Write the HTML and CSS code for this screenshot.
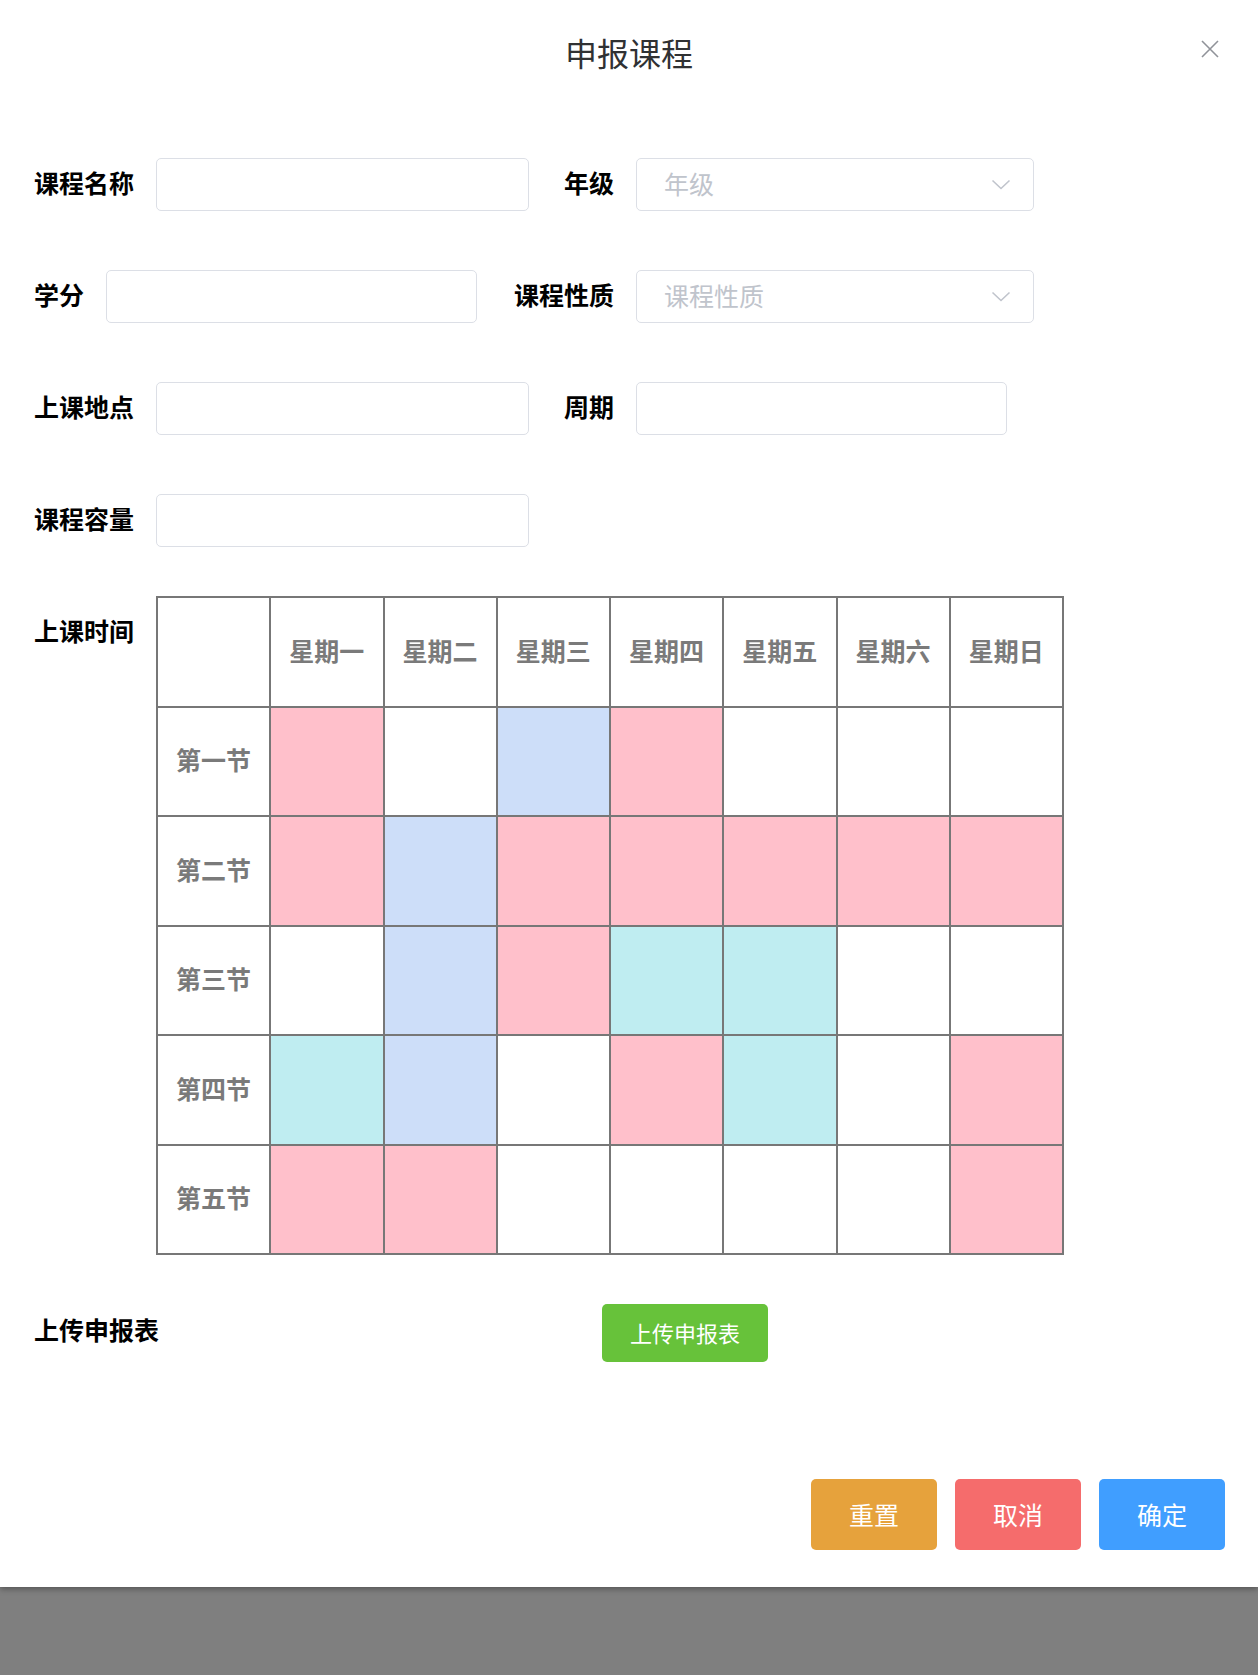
FILE: index.html
```html
<!DOCTYPE html>
<html lang="zh-CN">
<head>
<meta charset="utf-8">
<title>申报课程</title>
<link rel="stylesheet" href="styles.css">
</head>
<body>
<div class="dialog">
  <header class="dialog-header">
    <h1 class="dialog-title">申报课程</h1>
    <button class="close-btn" aria-label="关闭">
      <svg width="20" height="20" viewBox="0 0 20 20"><path d="M2 2L18 18M18 2L2 18" stroke="#909399" stroke-width="1.6" fill="none"/></svg>
    </button>
  </header>

  <div class="dialog-body">
    <div class="form-row">
      <div class="left-pair">
        <label class="form-label">课程名称</label>
        <div class="input w-372"></div>
        <label class="form-label right">年级</label>
      </div>
      <div class="input select w-398">
        <span class="placeholder">年级</span>
        <svg class="chevron" width="20" height="11" viewBox="0 0 20 11"><path d="M1.5 1.5L10 9.5L18.5 1.5" stroke="#c0c4cc" stroke-width="1.6" fill="none"/></svg>
      </div>
    </div>

    <div class="form-row">
      <div class="left-pair">
        <label class="form-label">学分</label>
        <div class="input w-370"></div>
        <label class="form-label right">课程性质</label>
      </div>
      <div class="input select w-398">
        <span class="placeholder">课程性质</span>
        <svg class="chevron" width="20" height="11" viewBox="0 0 20 11"><path d="M1.5 1.5L10 9.5L18.5 1.5" stroke="#c0c4cc" stroke-width="1.6" fill="none"/></svg>
      </div>
    </div>

    <div class="form-row">
      <div class="left-pair">
        <label class="form-label">上课地点</label>
        <div class="input w-372"></div>
        <label class="form-label right">周期</label>
      </div>
      <div class="input w-371"></div>
    </div>

    <div class="form-row">
      <div class="left-pair">
        <label class="form-label">课程容量</label>
        <div class="input w-372"></div>
      </div>
    </div>

    <div class="time-row">
      <label class="form-label time-label">上课时间</label>
      <table class="schedule">
        <tr>
          <th></th>
          <th>星期一</th><th>星期二</th><th>星期三</th><th>星期四</th><th>星期五</th><th>星期六</th><th>星期日</th>
        </tr>
        <tr>
          <th>第一节</th>
          <td class="pink"></td><td></td><td class="blue"></td><td class="pink"></td><td></td><td></td><td></td>
        </tr>
        <tr>
          <th>第二节</th>
          <td class="pink"></td><td class="blue"></td><td class="pink"></td><td class="pink"></td><td class="pink"></td><td class="pink"></td><td class="pink"></td>
        </tr>
        <tr>
          <th>第三节</th>
          <td></td><td class="blue"></td><td class="pink"></td><td class="cyan"></td><td class="cyan"></td><td></td><td></td>
        </tr>
        <tr>
          <th>第四节</th>
          <td class="cyan"></td><td class="blue"></td><td></td><td class="pink"></td><td class="cyan"></td><td></td><td class="pink"></td>
        </tr>
        <tr>
          <th>第五节</th>
          <td class="pink"></td><td class="pink"></td><td></td><td></td><td></td><td></td><td class="pink"></td>
        </tr>
      </table>
    </div>

    <div class="upload-row">
      <label class="form-label upload-label">上传申报表</label>
      <button class="btn btn-success">上传申报表</button>
    </div>
  </div>

  <footer class="dialog-footer">
    <button class="btn btn-lg btn-warning">重置</button>
    <button class="btn btn-lg btn-danger">取消</button>
    <button class="btn btn-lg btn-primary">确定</button>
  </footer>
</div>
</body>
</html>
```

FILE: styles.css
```css
* {
  box-sizing: border-box;
}

html, body {
  margin: 0;
  padding: 0;
}

body {
  background: #7f7f7f;
  font-family: "Noto Sans CJK SC", "Noto Sans", "Liberation Sans", sans-serif;
  height: 1675px;
  overflow: hidden;
}

.dialog {
  position: relative;
  background: #ffffff;
  height: 1587px;
  box-shadow: 0 2px 6px rgba(0, 0, 0, 0.35);
  display: flex;
  flex-direction: column;
}

.dialog-header {
  height: 106px;
  display: flex;
  align-items: center;
  justify-content: center;
}

.dialog-title {
  margin: 0;
  font-size: 32px;
  font-weight: 400;
  color: #303133;
  line-height: 1;
  padding-bottom: 2px;
}

.close-btn {
  position: absolute;
  top: 39px;
  right: 38px;
  width: 20px;
  height: 20px;
  padding: 0;
  border: 0;
  background: transparent;
  display: flex;
}

.dialog-body {
  padding: 52px 0 0 34px;
}

.form-row {
  display: flex;
  align-items: center;
  height: 53px;
  margin-bottom: 59px;
}

.left-pair {
  width: 580px;
  display: flex;
  align-items: center;
}

.form-label {
  font-size: 25px;
  font-weight: 700;
  color: #000000;
  line-height: 1;
  white-space: nowrap;
  padding-bottom: 4px;
}

.form-label.right {
  margin-left: auto;
}

.input {
  height: 53px;
  border: 1px solid #dcdfe6;
  border-radius: 5px;
  background: #fff;
  margin-left: 22px;
}

.select {
  margin-left: 22px;
  display: flex;
  align-items: center;
  justify-content: space-between;
  padding: 0 22px 0 27px;
}

.w-372 { width: 373px; }
.w-370 { width: 371px; }
.w-371 { width: 371px; margin-left: 22px; }
.w-398 { width: 398px; }

.placeholder {
  font-size: 25px;
  color: #c0c4cc;
  line-height: 1;
  padding-bottom: 3px;
}

.chevron {
  display: block;
}

.time-row {
  display: flex;
  align-items: flex-start;
  margin-top: -10px;
}

.time-label {
  padding-top: 22px;
  padding-bottom: 0;
  width: 122px;
}

.schedule {
  border-collapse: collapse;
  width: 908px;
  height: 659px;
  table-layout: fixed;
}

.schedule th,
.schedule td {
  border: 2px solid #777777;
  padding: 0;
  text-align: center;
  vertical-align: middle;
  background: #ffffff;
}

.schedule th {
  font-size: 25px;
  font-weight: 700;
  color: #7a7a7a;
  padding-bottom: 4px;
}

.schedule td.pink { background: #ffc0cb; }
.schedule td.blue { background: #cddef9; }
.schedule td.cyan { background: #bfedf1; }

.upload-row {
  display: flex;
  align-items: center;
  margin-top: 49px;
  height: 58px;
}

.upload-label {
  width: 568px;
  padding-bottom: 7px;
}

.btn {
  border: 0;
  color: #ffffff;
  font-family: inherit;
  font-weight: 400;
  border-radius: 5px;
  line-height: 1;
  cursor: pointer;
}

.btn-success {
  background: #67c23a;
  width: 166px;
  height: 58px;
  font-size: 22px;
  padding-bottom: 3px;
}

.dialog-footer {
  margin-top: auto;
  display: flex;
  justify-content: flex-end;
  gap: 18px;
  padding: 0 33px 37px 0;
}

.btn-lg {
  width: 126px;
  height: 71px;
  font-size: 25px;
  padding-bottom: 2px;
}

.btn-warning { background: #e6a23c; }
.btn-danger { background: #f56c6c; }
.btn-primary { background: #409eff; }
```
